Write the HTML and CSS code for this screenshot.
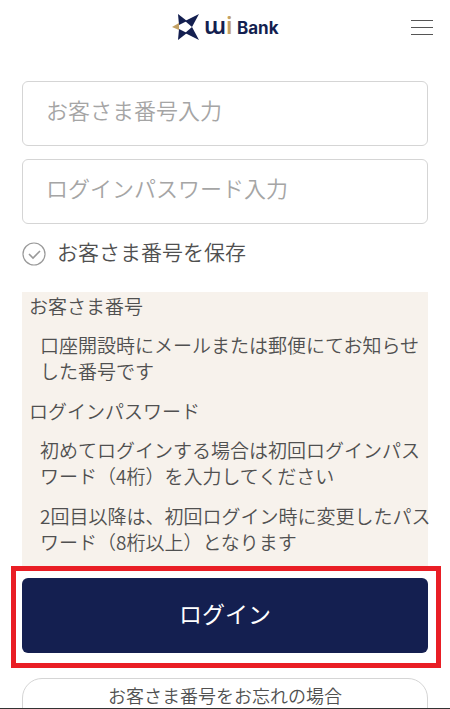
FILE: index.html
```html
<!DOCTYPE html>
<html lang="ja">

<head>
    <meta charset="UTF-8" />
    <meta name="viewport" content="width=device-width, initial-scale=1.0" />
    <title>UI Bank ログイン</title>
    <link rel="stylesheet" href="styles.css">
</head>

<body>
    <div class="screen">
        <header class="header">
            <a href="#" class="logo" aria-label="UI Bank">
                <svg width="108" height="40" viewBox="0 -5 108 40">
                    <g fill="#141f50">
                        <path d="M7 2 L16 9 L8 13 Z" />
                        <path d="M28 2 L21 15 L14 9 Z" />
                        <path d="M7 28 L8 17 L16 21 Z" />
                        <path d="M28 28 L14 21 L21 15 Z" />
                    </g>
                    <path d="M1 15 L8 11 L8 18 Z" fill="#c2a063" />
                    <g class="logo-text">
                        <text x="33" y="22" class="logo-ui">ɯ<tspan class="logo-i">i</tspan></text>
                        <text x="66" y="22">Bank</text>
                    </g>
                </svg>
            </a>
            <button type="button" class="menu" aria-label="メニュー">
                <span></span>
                <span></span>
                <span></span>
            </button>
        </header>

        <form class="login" action="#">
            <input type="text" class="field" name="customer_no" placeholder="お客さま番号入力" aria-label="お客さま番号入力" />
            <input type="password" class="field" name="password" placeholder="ログインパスワード入力" aria-label="ログインパスワード入力" />
            <label class="save">
                <input type="checkbox" name="save" />
                <svg width="24" height="24" viewBox="0 0 24 24" fill="none">
                    <circle cx="12" cy="12" r="11" stroke="#999" stroke-width="1.2" />
                    <path d="M7 12 L11 16 L18 9" stroke="#999" stroke-width="1.6" />
                </svg>
                <span>お客さま番号を保存</span>
            </label>

            <dl class="info">
                <dt>お客さま番号</dt>
                <dd>口座開設時にメールまたは郵便にてお知らせ<br>した番号です</dd>
                <dt>ログインパスワード</dt>
                <dd>初めてログインする場合は初回ログインパス<br>ワード（4桁）を入力してください</dd>
                <dd>2回目以降は、初回ログイン時に変更したパス<br>ワード（8桁以上）となります</dd>
            </dl>

            <div class="highlight">
                <button type="submit" class="submit">ログイン</button>
            </div>
            <a href="#" class="forgot">お客さま番号をお忘れの場合</a>
        </form>
    </div>
</body>

</html>
```

FILE: styles.css
```css
* {
    box-sizing: border-box;
    margin: 0;
    padding: 0;
}

body {
    font-family: 'Noto Sans CJK JP', sans-serif;
    font-weight: 350;
    background: #fff;
    color: #505050;
}

.screen {
    height: 100vh;
    overflow: hidden;
    border-bottom: 1px solid #333;
}

.header {
    display: grid;
    grid-template-columns: 1fr auto 1fr;
    align-items: center;
    height: 54px;
    padding: 0 17px;
}

.logo {
    grid-column: 2;
    display: flex;
}

.logo-text {
    font-family: Inter, sans-serif;
    font-size: 17px;
    font-weight: 700;
    fill: #141f50;
}

.logo-ui {
    font-family: 'Noto Sans', sans-serif;
    font-size: 23px;
    font-weight: 600;
}

.logo-i {
    fill: #c2a063;
}

.menu {
    justify-self: end;
    display: flex;
    flex-direction: column;
    gap: 6px;
    background: none;
    border: none;
    cursor: pointer;
}

.menu span {
    width: 22px;
    height: 1px;
    background: #555;
}

.login {
    display: flex;
    flex-direction: column;
    padding: 27px 22px 0;
}

.field {
    width: 100%;
    height: 65px;
    margin-bottom: 13px;
    padding: 0 23px 10px;
    border: 1px solid #d5d5d5;
    border-radius: 6px;
    font-family: inherit;
    font-weight: inherit;
    font-size: 22px;
    color: #505050;
}

.field::placeholder {
    color: #a5a5a5;
}

.save {
    display: flex;
    align-items: center;
    gap: 11px;
    height: 34px;
    font-size: 21px;
    cursor: pointer;
}

.save span {
    padding-bottom: 6px;
}

.save input {
    position: absolute;
    opacity: 0;
}

.info {
    display: flex;
    flex-direction: column;
    gap: 13px;
    margin-top: 21px;
    padding: 1px 0 11px 7px;
    background: #f7f2ec;
    font-size: 19px;
    line-height: 26px;
    white-space: nowrap;
}

.info dd {
    padding-left: 11px;
}

.info dd + * {
    margin-top: 1px;
}

.highlight {
    margin: 0 -13px 0 -11px;
    padding: 7px 8px 10px 6px;
    border: 5px solid #e91e25;
}

.submit {
    display: block;
    width: 100%;
    height: 75px;
    padding-bottom: 6px;
    background: #141f50;
    color: #fff;
    border: none;
    border-radius: 6px;
    font-family: inherit;
    font-size: 23px;
    cursor: pointer;
}

.forgot {
    height: 65px;
    margin-top: 10px;
    border: 1px solid #d5d5d5;
    border-radius: 20px;
    color: #505050;
    font-size: 18px;
    line-height: 32px;
    text-align: center;
    text-decoration: none;
}
```
